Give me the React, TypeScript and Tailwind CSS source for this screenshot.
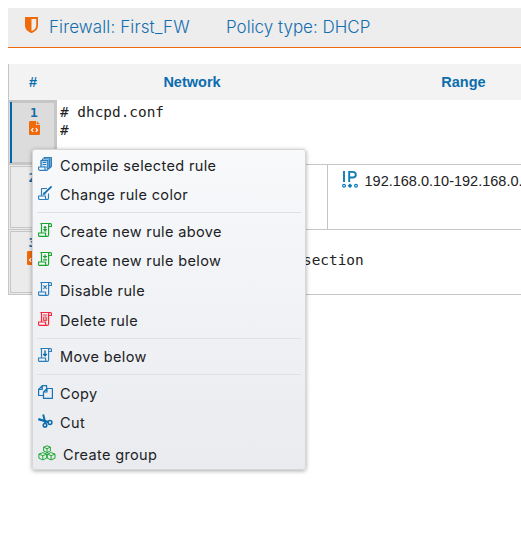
import React from 'react';

type Kind = 'compile' | 'edit' | 'above' | 'below' | 'disable' | 'delete' | 'move' | 'copy' | 'cut' | 'group';

const blue = '#1874b5';
const green = '#18a52c';

function MenuIcon({ kind }: { kind: Kind }) {
  if (kind === 'group') {
    return (
      <svg width="18" height="16" viewBox="0 0 18 16" fill="none" stroke={green} strokeWidth="0.95" strokeLinejoin="round">
        <path d="M9 .8L12.4 2.2V6L9 7.6L5.6 6V2.2ZM5.6 2.2L9 3.7L12.4 2.2M9 3.7V7.6M4.8 7.6L8.6 9.1V13.2L4.8 14.9L.9 13.2V9.1ZM.9 9.1L4.8 10.7L8.6 9.1M4.8 10.7V14.9M13.1 7.6L17 9.1V13.2L13.1 14.9L9.3 13.2V9.1ZM9.3 9.1L13.1 10.7L17 9.1M13.1 10.7V14.9" />
      </svg>
    );
  }
  if (kind === 'copy') {
    return (
      <svg width="15" height="14" viewBox="0 0 15 14" fill="none" stroke={blue} strokeWidth="1.2" strokeLinejoin="round">
        <path d="M5.2 10.5H.6V4.3L4.3.6H8.6V3.5M.8 4.3H4.3V.8M5.5 13.4V7L9 3.5H14.4V13.4ZM5.5 7H9V3.5" />
      </svg>
    );
  }
  if (kind === 'cut') {
    return (
      <svg width="15" height="14" viewBox="0 0 15 14" fill="none" stroke="#086bad" strokeWidth="1.5">
        <path d="M.3 5.1L10.6 8.1" strokeWidth="2.2" />
        <path d="M5.2 .5L7.3 9.1" strokeWidth="1.9" />
        <circle cx="7" cy="11.2" r="1.8" />
        <circle cx="12" cy="8.5" r="1.9" />
      </svg>
    );
  }
  const color = kind === 'delete' ? '#f5253d' : kind === 'above' || kind === 'below' ? green : '#2a7dba';
  return (
    <svg width="14" height="14" viewBox="0 0 14 14" fill="none" stroke={color} strokeWidth="1.15" strokeLinejoin="round">
      {kind === 'compile' ? (
        <>
          <path d="M3 3.5H9.5L13.4.6V9.5L9.5 12.5L7 10H3Z" fill="#8bb9dc" stroke="none" />
          <path d="M4.2 4.6H8.8V9.2H4.2Z" fill="#dce9f3" stroke="none" />
          <path d="M2.9 9.8V3.5H9.8V11.7Q9.8 13.4 8.4 13.4H2Q.6 13.4 .6 11.9V10H7V11.9Q7 13.4 8.4 13.4M4.5 3.3V2H11.6V11L10 12.4M6.2 1.8V.6H13.4V9.5L11.6 11M4.6 5.5H8.2M4.6 7.5H8.2" />
        </>
      ) : kind === 'edit' ? (
        <>
          <path d="M9 2.5H3.5V9.8M10.5 7.5V11.9Q10.5 13.5 9 13.5H2Q.5 13.5 .5 12V10H7.5V12Q7.5 13.5 9 13.5M5.2 8.5L6 6.8L7.2 7.9Z" />
          <path d="M6.4 7.4L13.6.4" strokeWidth="1.6" stroke="#086bad" />
        </>
      ) : (
        <path d="M3.5 9.8V2Q3.5.5 2.4.5M2.4.5H12Q13.5.5 13.5 2V3.5H10.6M10.6 3.5V2Q10.6.5 12 .5M10.6 3.5V11.9Q10.6 13.4 9.1 13.4H2Q.5 13.4 .5 11.9V10H7.6V11.9Q7.6 13.4 9.1 13.4" />
      )}
      {kind === 'above' && <path d="M7 3V5.8M5.6 4.4H8.4M5.2 6.5H9M7 5.8V8.6M5.7 7.8H8.3" />}
      {kind === 'below' && <path d="M7 2.6V6.6M5 4.6H9M5 7.9H9" strokeWidth="1.2" />}
      {kind === 'disable' && <path d="M5.4 3.4L8.7 6.9M8.7 3.4L5.4 6.9" />}
      {kind === 'delete' && <path d="M4.8 3H9.3M5.4 4.6V8.5H8.7V4.6M7.05 3.6V8" strokeWidth="0.9" />}
      {kind === 'move' && <path d="M7 2.6V7.8M5.2 5.9L7 7.7L8.8 5.9" strokeWidth="1.4" stroke="#086bad" />}
    </svg>
  );
}

function Item({ kind, label, className }: { kind: Kind; label: string; className: string }) {
  return (
    <div className={`flex items-center ${className}`}>
      <span className={`-mt-[3px] shrink-0 ${kind === 'group' ? 'w-[25px]' : 'w-[22px]'}`}><MenuIcon kind={kind} /></span>
      <span className="whitespace-nowrap">{label}</span>
    </div>
  );
}

function FileCode() {
  return (
    <svg width="11" height="14" viewBox="0 0 11 14">
      <path d="M1.3 0H7V4H11V12.7Q11 14 9.7 14H1.3Q0 14 0 12.7V1.3Q0 0 1.3 0ZM7.8 0L11 3.2H7.8Z" fill="#f06a0a" />
      <path d="M4.2 7.2L2.5 9L4.2 10.8M6.8 7.2L8.5 9L6.8 10.8" fill="none" stroke="#fff" strokeWidth="1.2" />
    </svg>
  );
}

function NumberCell({ value, file, selected }: { value: number; file?: boolean; selected?: boolean }) {
  return (
    <div className={`flex w-[49px] shrink-0 border-[#c6c6c6] ${selected ? 'h-[65px] border-y-[3px] border-r-[3px] border-l border-y-double border-r-double border-l-solid bg-[#dcdcdc]' : '-mt-px h-[66px] border-[3px] border-double bg-[#ebebeb] pt-px'}`}>
      {selected && <span className="-my-px ml-px w-[2px] shrink-0 bg-[#0068ab]" />}
      <div className={`flex flex-1 flex-col items-center pt-[2px] leading-[15px] text-[#176fa9] ${selected ? 'pl-[2px]' : ''}`}>
        <span className="font-['DejaVu_Sans_Mono'] text-[13px] font-bold">{value}</span>
        {file && <span className="mt-px"><FileCode /></span>}
      </div>
    </div>
  );
}

export default function App() {
  return (
    <div className="relative h-[546px] w-[521px] overflow-hidden bg-white pl-2 pt-2 font-['Inter']">
      <header className="flex h-10 items-center border-b border-[#ef6810] bg-[#ededed] text-[17px] font-light text-[#146fae]">
        <svg className="-mt-[6px] ml-[17px] shrink-0" width="13" height="16" viewBox="0 0 13 16">
          <path d="M.9 1H12.1V8.5Q12.1 13 6.5 15.2Q.9 13 .9 8.5Z" fill="none" stroke="#f06a0a" strokeWidth="1.8" />
          <path d="M1 1H6.5V15L3 13L1 9.5Z" fill="#f06a0a" />
        </svg>
        <span className="ml-[11px] w-[177px] whitespace-nowrap tracking-[0.12px]">Firewall: First_FW</span>
        <span className="whitespace-nowrap">Policy type: DHCP</span>
      </header>

      <main className="mt-4">
        <div className="flex h-9 items-center border-l border-[#c6c6c6] bg-[#f3f3f3] pt-[2px] font-['Liberation_Sans'] text-[14.5px] font-bold text-[#0b6dae]">
          <span className="w-12 shrink-0 text-center">#</span>
          <span className="w-[270px] shrink-0 text-center">Network</span>
          <span className="w-[273px] shrink-0 text-center">Range</span>
        </div>
        <div className="flex h-[65px] border-b border-[#c6c6c6]">
          <NumberCell value={1} file selected />
          <pre className="pl-[3px] pt-[3px] font-['DejaVu_Sans_Mono'] text-[14.4px] leading-[18px] text-[#222]">{'# dhcpd.conf\n#'}</pre>
        </div>
        <div className="flex h-[65px] border-b border-[#c6c6c6]">
          <NumberCell value={2} />
          <div className="w-[271px] shrink-0 border-r border-[#c6c6c6]" />
          <div className="flex h-[34px] items-center pl-[14px] font-['Liberation_Sans'] text-[14.5px] text-[#222]">
            <svg width="17" height="19" viewBox="0 0 17 19" fill="none" stroke="#117bb7" className="-mt-[5px] mr-[5.5px] shrink-0">
              <path d="M2 1V12M7.2 12V1.9H10.6Q13.8 1.9 13.8 4.7T10.6 7.5H7.2" strokeWidth="1.9" />
              <circle cx="2" cy="15.7" r="1.4" strokeWidth="1.2" />
              <circle cx="14" cy="15.7" r="1.4" strokeWidth="1.2" />
              <path d="M8 13.4L10.4 15.7L8 18L5.6 15.7Z" fill="#117bb7" stroke="none" />
            </svg>
            <span className="whitespace-nowrap">192.168.0.10-192.168.0.20</span>
          </div>
        </div>
        <div className="flex h-[65px] border-b border-[#c6c6c6]">
          <NumberCell value={3} file />
          <pre className="pl-[246px] pt-[21px] font-['DejaVu_Sans_Mono'] text-[14.4px] leading-[18px] text-[#222]">section</pre>
        </div>
      </main>

      <nav className="absolute left-8 top-[149px] h-[321px] w-[274px] rounded-[3px] border border-[#d5d7d9] bg-linear-to-b from-[#f7f9fb] to-[#e9ebef] px-1 text-[14.5px] leading-[20px] tracking-[0.36px] text-[#202124] shadow-[0_1px_4px_rgba(0,0,0,0.35)]">
        <div className="pl-[1px] pt-[1px]">
          <Item kind="compile" label="Compile selected rule" className="h-[29px]" />
          <Item kind="edit" label="Change rule color" className="h-[29px]" />
        </div>
        <div className="mt-[3px] h-px bg-[#dfe2e5]" />
        <div className="pl-[1px] pt-[4px]">
          <Item kind="above" label="Create new rule above" className="h-[29px]" />
          <Item kind="below" label="Create new rule below" className="h-[29px]" />
          <Item kind="disable" label="Disable rule" className="h-[31px]" />
          <Item kind="delete" label="Delete rule" className="h-[29px]" />
        </div>
        <div className="mt-[3px] h-px bg-[#dfe2e5]" />
        <div className="pl-[1px] pt-[3px]"><Item kind="move" label="Move below" className="h-[29px]" /></div>
        <div className="mt-[3px] h-px bg-[#dfe2e5]" />
        <div className="pl-[1px] pt-[4px]">
          <Item kind="copy" label="Copy" className="h-[29px]" />
          <Item kind="cut" label="Cut" className="h-[29px]" />
          <Item kind="group" label="Create group" className="h-[35px]" />
        </div>
      </nav>
    </div>
  );
}
